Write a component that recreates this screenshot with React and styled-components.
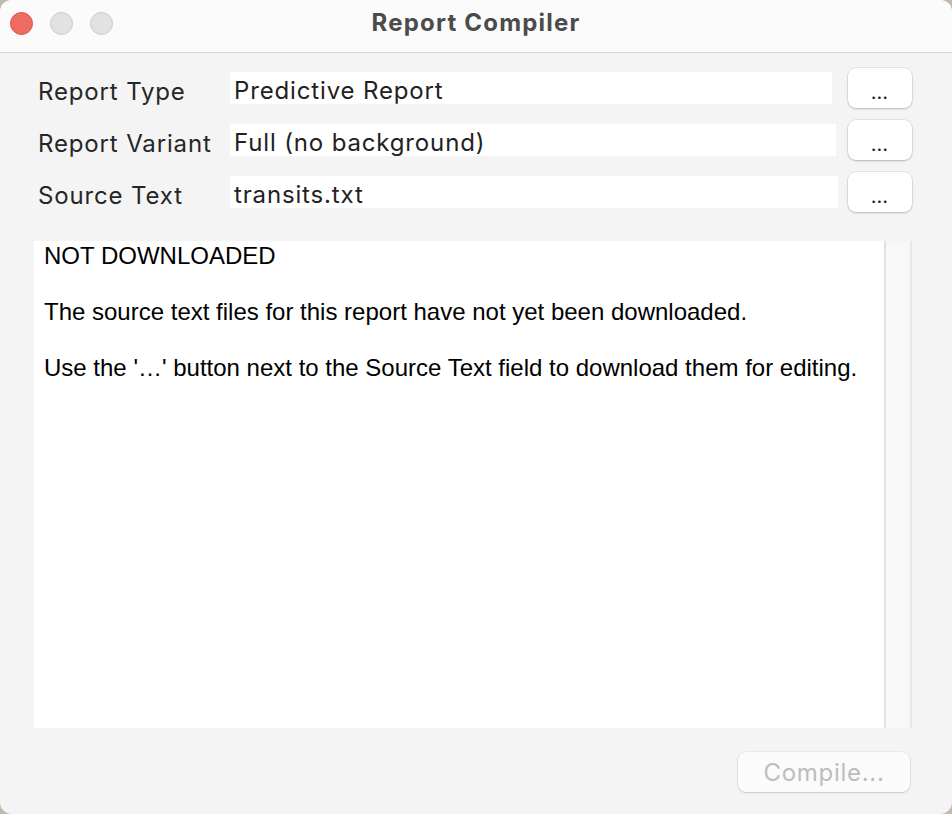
import React from "react";
import styled, { createGlobalStyle } from "styled-components";

const Global = createGlobalStyle`
  html, body {
    margin: 0;
    padding: 0;
    height: 100%;
    background: #bfbbae;
  }
  #root {
    height: 100%;
  }
  * {
    box-sizing: border-box;
  }
`;

const Window = styled.div`
  height: 100vh;
  display: flex;
  flex-direction: column;
  background: #f4f4f4;
  border-radius: 12px;
  overflow: hidden;
  font-family: Inter, "Noto Sans", sans-serif;
`;

const TitleBar = styled.div`
  position: relative;
  height: 53px;
  flex-shrink: 0;
  display: flex;
  align-items: center;
  justify-content: center;
  background: #fbfbfb;
  border-bottom: 1px solid #d7d7d7;
`;

const Lights = styled.div`
  position: absolute;
  left: 10px;
  top: 12px;
  display: flex;
  gap: 17px;
`;

const Light = styled.span`
  width: 23px;
  height: 23px;
  border-radius: 50%;
  background: ${(p) => (p.red ? "#ee6b5f" : "#e2e2e2")};
  border: 1px solid ${(p) => (p.red ? "#d6554b" : "#cbcbcb")};
`;

const Title = styled.div`
  font-size: 24px;
  font-weight: 700;
  letter-spacing: 1.2px;
  color: #4b4b4b;
  margin-top: -8px;
`;

const Body = styled.div`
  flex: 1;
  display: flex;
  flex-direction: column;
  padding: 15px 40px 22px 34px;
  min-height: 0;
`;

const Form = styled.div`
  display: flex;
  flex-direction: column;
  gap: 12px;
  padding-left: 4px;
`;

const Row = styled.div`
  display: flex;
  align-items: center;
  height: 40px;
`;

const Label = styled.div`
  width: 192px;
  flex-shrink: 0;
  padding-top: 6px;
  font-size: 24px;
  letter-spacing: 0.85px;
  color: #262626;
  white-space: nowrap;
`;

const Field = styled.div`
  flex: 1;
  height: 32px;
  margin-right: ${(p) => p.gap}px;
  background: #ffffff;
  padding: 3px 0 0 4px;
  font-size: 24px;
  letter-spacing: 0.85px;
  line-height: 32px;
  color: #222222;
  white-space: nowrap;
  overflow: hidden;
`;

const DotsButton = styled.button`
  width: 64px;
  height: 40px;
  flex-shrink: 0;
  border: none;
  border-radius: 8px;
  background: #ffffff;
  box-shadow: 0 0 0 0.5px rgba(0, 0, 0, 0.12), 0 1px 2px rgba(0, 0, 0, 0.22);
  font-family: Inter, sans-serif;
  font-size: 20px;
  letter-spacing: 1px;
  color: #222;
  padding: 8px 0 0;
`;

const Editor = styled.div`
  flex: 1;
  margin-top: 29px;
  display: flex;
  min-height: 0;
`;

const TextArea = styled.div`
  flex: 1;
  background: #ffffff;
  padding: 1px 10px 0 10px;
  font-family: "Liberation Sans", Arial, sans-serif;
  font-size: 24px;
  line-height: 28px;
  color: #000;
`;

const Para = styled.p`
  margin: 0 0 28px;
`;

const ScrollTrack = styled.div`
  width: 28px;
  flex-shrink: 0;
  background: #f8f8f8;
  border-left: 2px solid #e2e2e2;
  border-right: 2px solid #e8e8e8;
`;

const Footer = styled.div`
  display: flex;
  justify-content: flex-end;
  margin-top: 24px;
  padding-right: 2px;
`;

const CompileButton = styled.button`
  width: 172px;
  height: 40px;
  border: none;
  border-radius: 8px;
  background: #fbfbfb;
  box-shadow: 0 0 0 0.5px rgba(0, 0, 0, 0.08), 0 1px 2px rgba(0, 0, 0, 0.14);
  font-family: Inter, sans-serif;
  font-size: 24px;
  letter-spacing: 0.7px;
  color: #bdbdbd;
  padding: 0;
`;

const rows = [
  { label: "Report Type", value: "Predictive Report", gap: 16 },
  { label: "Report Variant", value: "Full (no background)", gap: 12 },
  { label: "Source Text", value: "transits.txt", gap: 10 },
];

export default function App() {
  return (
    <>
      <Global />
      <Window>
        <TitleBar>
          <Lights>
            <Light red />
            <Light />
            <Light />
          </Lights>
          <Title>Report Compiler</Title>
        </TitleBar>
        <Body>
          <Form>
            {rows.map((r) => (
              <Row key={r.label}>
                <Label>{r.label}</Label>
                <Field gap={r.gap}>{r.value}</Field>
                <DotsButton>…</DotsButton>
              </Row>
            ))}
          </Form>
          <Editor>
            <TextArea>
              <Para>NOT DOWNLOADED</Para>
              <Para>The source text files for this report have not yet been downloaded.</Para>
              <Para>Use the '…' button next to the Source Text field to download them for editing.</Para>
            </TextArea>
            <ScrollTrack />
          </Editor>
          <Footer>
            <CompileButton disabled>Compile...</CompileButton>
          </Footer>
        </Body>
      </Window>
    </>
  );
}
